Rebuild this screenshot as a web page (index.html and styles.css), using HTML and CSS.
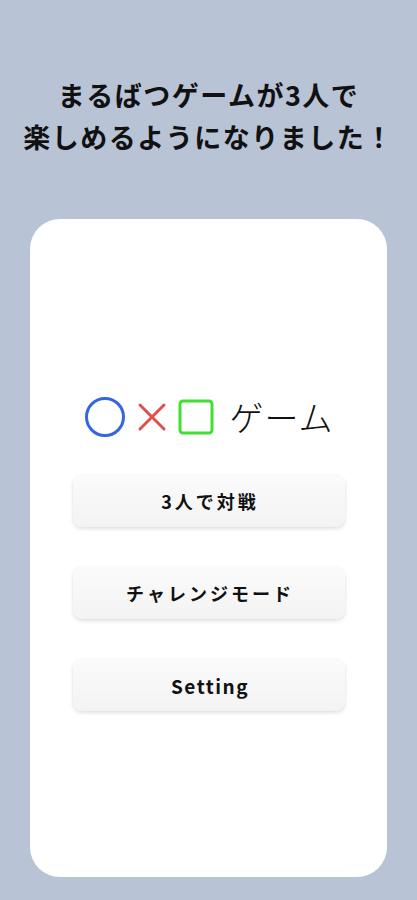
FILE: index.html
```html
<!DOCTYPE html>
<html lang="ja">
<head>
    <meta charset="UTF-8">
    <meta name="viewport" content="width=device-width, initial-scale=1.0">
    <title>まるばつゲーム</title>
    <link rel="stylesheet" href="styles.css">
</head>
<body>
    <!-- キャッチコピー -->
    <h1 class="headline">まるばつゲームが3人で<br>楽しめるようになりました！</h1>

    <!-- アプリ画面 -->
    <div class="card">
        <div class="logo">
            <svg class="mark" width="42" height="42" viewBox="0 0 42 42">
                <circle cx="21" cy="21" r="18.5" fill="none" stroke="#3366e0" stroke-width="3"/>
            </svg>
            <svg class="mark" width="30" height="30" viewBox="0 0 30 30">
                <path d="M3 3 L27 27 M27 3 L3 27" stroke="#e0504a" stroke-width="3" stroke-linecap="round"/>
            </svg>
            <svg class="mark" width="36" height="36" viewBox="0 0 36 36">
                <rect x="2" y="2" width="32" height="32" rx="3" fill="none" stroke="#44dd33" stroke-width="3"/>
            </svg>
            <span class="logo-text">ゲーム</span>
        </div>

        <div class="menu">
            <button class="menu-btn">3人で対戦</button>
            <button class="menu-btn">チャレンジモード</button>
            <button class="menu-btn menu-btn-latin">Setting</button>
        </div>
    </div>
</body>
</html>
```

FILE: styles.css
```css
body {
    margin: 0;
    background-color: #b9c3d6;
    font-family: "Noto Sans CJK JP", "Noto Sans", sans-serif;
    color: #111;
}
.headline {
    margin: 0;
    padding-top: 74px;
    text-align: center;
    font-size: 27px;
    font-weight: bold;
    line-height: 42px;
    letter-spacing: 1.5px;
}
.card {
    margin: 61px 30px 0 30px;
    height: 658px;
    background: white;
    border-radius: 30px;
    display: flex;
    flex-direction: column;
    align-items: center;
    padding-top: 177px;
    box-sizing: border-box;
}
.logo {
    display: flex;
    align-items: center;
    gap: 11px;
    height: 42px;
}
.logo-text {
    font-size: 34px;
    font-weight: 300;
    line-height: 42px;
    margin-left: 5px;
    letter-spacing: 1px;
}
.menu {
    margin-top: 37px;
    display: flex;
    flex-direction: column;
    gap: 40px;
}
.menu-btn {
    width: 272px;
    height: 52px;
    border: none;
    border-radius: 9px;
    background: linear-gradient(#fbfbfb, #f3f3f3);
    box-shadow: 0 2px 4px rgba(0, 0, 0, 0.12), 0 0 2px rgba(0, 0, 0, 0.05);
    font-family: "Noto Sans CJK JP", "Noto Sans", sans-serif;
    font-size: 18px;
    font-weight: bold;
    color: #111;
    letter-spacing: 3px;
    text-indent: 3px;
    cursor: pointer;
}
.menu-btn-latin {
    font-size: 19px;
    letter-spacing: 1.5px;
}
```
